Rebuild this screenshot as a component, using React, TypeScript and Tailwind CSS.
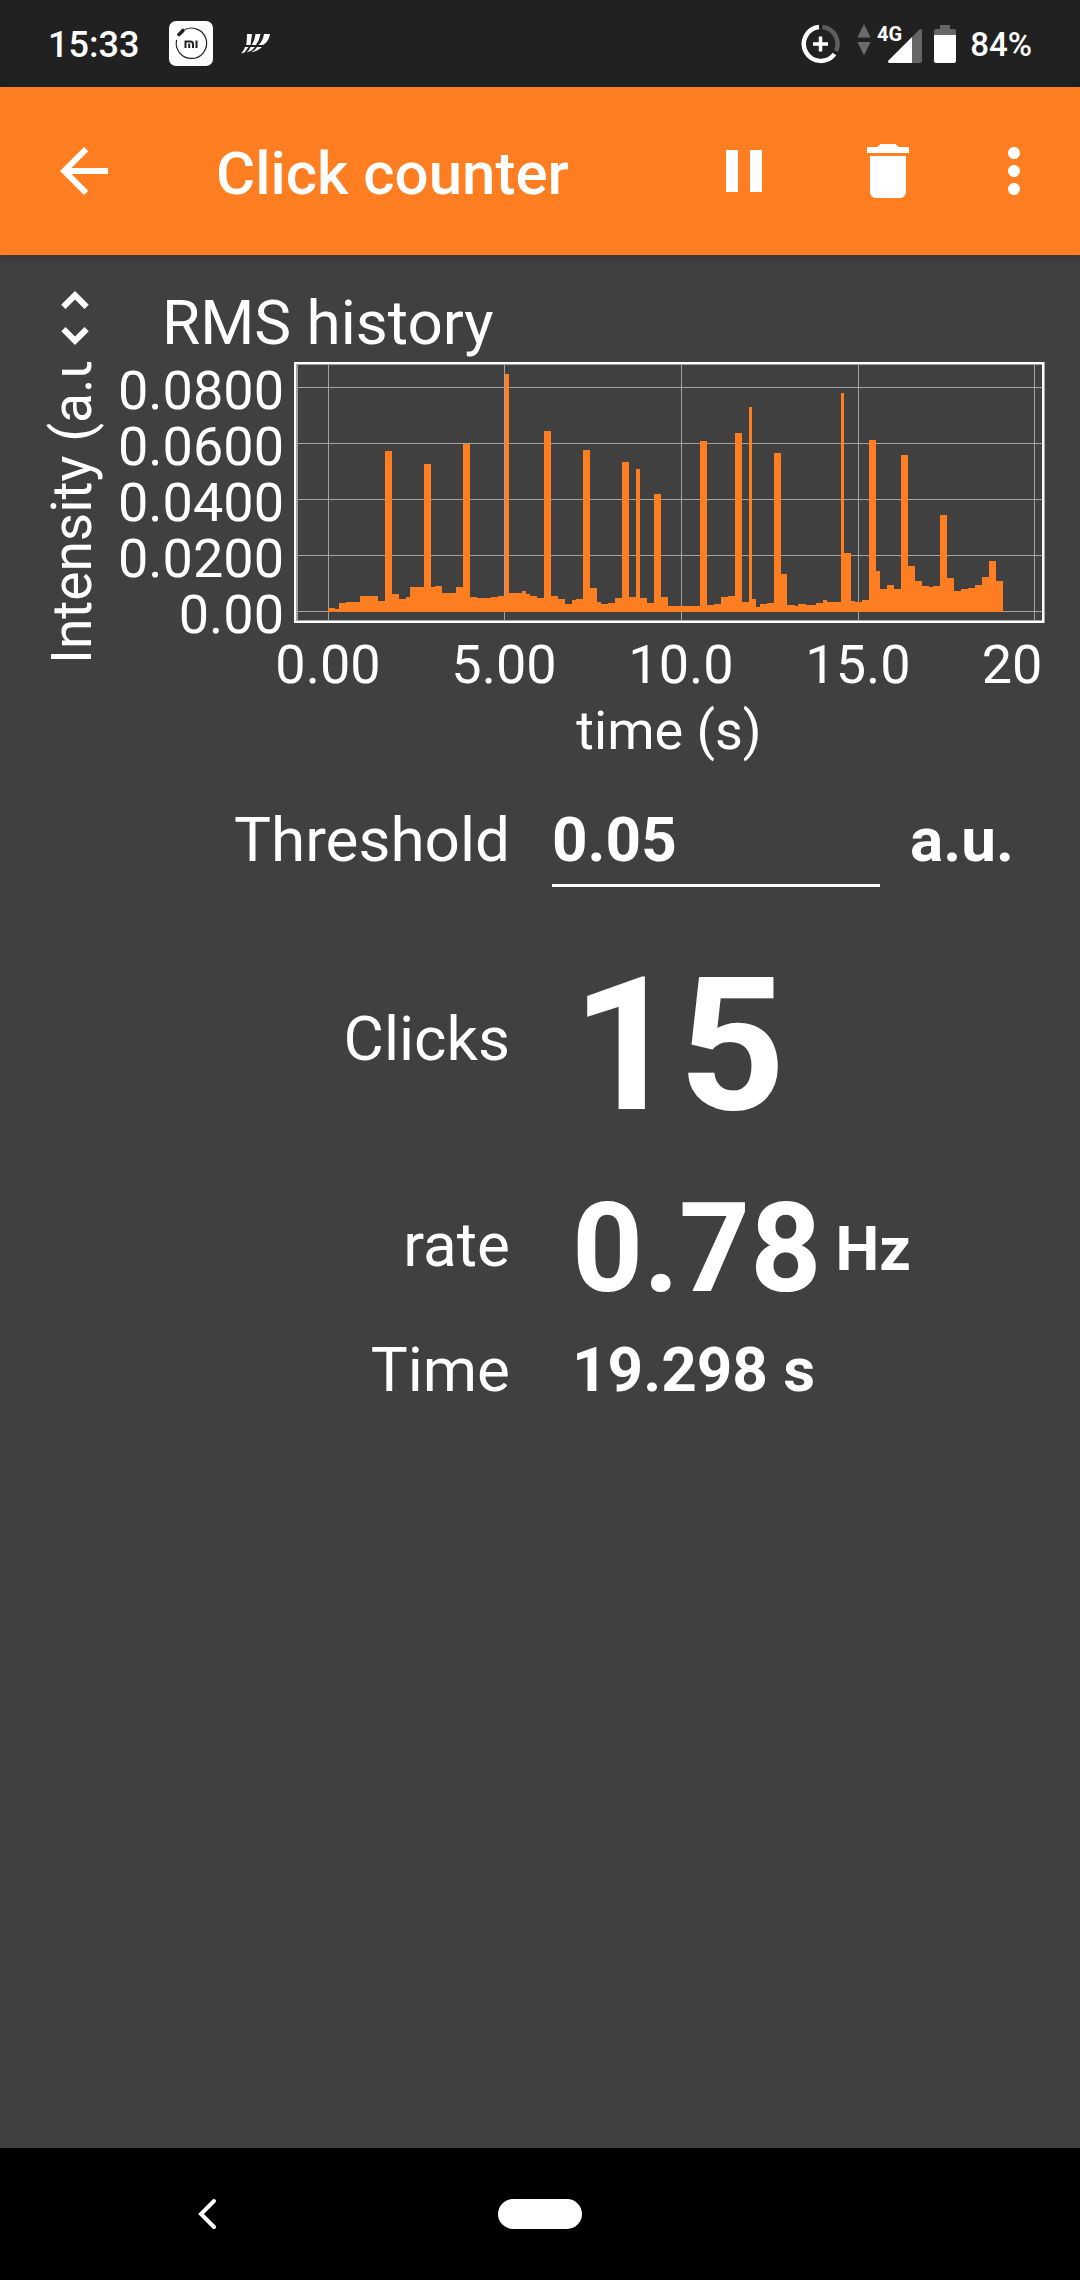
import { useState } from "react";
import type { ReactNode } from "react";

// Each entry is [start, height] in plot pixels; a step lasts until the next start.
const steps: [number, number][] = [
  [0, 4], [7, 3], [11, 9], [18, 10], [32, 16], [50, 11], [57, 161], [64, 18], [71, 13], [78, 15],
  [82, 25], [96, 148], [103, 25], [107, 26], [114, 19], [128, 25], [135, 168], [142, 15], [149, 14],
  [163, 15], [170, 16], [177, 238], [181, 19], [194, 21], [198, 18], [202, 16], [209, 14], [216, 181],
  [223, 16], [230, 13], [237, 8], [244, 12], [248, 13], [255, 162], [262, 24], [269, 10], [273, 8],
  [280, 9], [287, 14], [294, 150], [301, 15], [308, 143], [312, 14], [319, 9], [326, 118], [333, 15],
  [340, 6], [372, 171], [379, 7], [386, 8], [393, 15], [400, 16], [407, 179], [414, 10], [421, 205],
  [424, 13], [428, 5], [432, 8], [439, 9], [446, 159], [453, 38], [459, 7], [467, 6], [470, 8],
  [478, 7], [488, 9], [495, 12], [499, 10], [513, 219], [516, 59], [523, 11], [527, 10], [534, 12],
  [541, 172], [548, 41], [552, 23], [559, 27], [566, 23], [573, 157], [580, 46], [587, 31], [594, 26],
  [601, 25], [605, 26], [612, 97], [619, 34], [626, 21], [633, 23], [640, 24], [647, 27], [654, 35],
  [661, 51], [668, 31],
];
const seriesEnd = 675;
const originX = 217;
const baseY = 256;

const seriesPath =
  `M${originX} ${baseY}` +
  steps.map(([x, h]) => `H${originX + x}V${baseY - h}`).join("") +
  `H${originX + seriesEnd}V${baseY}Z`;

const yTicks = [
  { y: 31, label: "0.0800" },
  { y: 87, label: "0.0600" },
  { y: 143, label: "0.0400" },
  { y: 199, label: "0.0200" },
  { y: 255, label: "0.00" },
];

const xTicks = [
  { x: 217, labelX: 217, label: "0.00" },
  { x: 393, labelX: 393, label: "5.00" },
  { x: 570, labelX: 570, label: "10.0" },
  { x: 747, labelX: 747, label: "15.0" },
  { x: 923, labelX: 901, label: "20" },
];

function MaterialIcon({ d }: { d: string }) {
  return (
    <svg viewBox="0 0 24 24" className="size-[72px] shrink-0" fill="currentColor" aria-hidden="true">
      <path d={d} />
    </svg>
  );
}

function StatusBar() {
  return (
    <div className="flex h-[87px] items-center justify-between bg-[#212121] px-12">
      <div className="flex items-center">
        <span className="pt-[2px] text-[36px] leading-[44px] font-medium">15:33</span>
        <svg viewBox="0 0 44 45" className="ml-[30px] h-[45px] w-[44px]" aria-hidden="true">
          <rect width="44" height="45" rx="7" fill="#fff" />
          <path d="M16 8.500A15.200 15.200 0 1 1 7.600 19" fill="none" stroke="#212121" strokeWidth="1.200" />
          <path d="M10 13.500l4-4" stroke="#212121" strokeWidth="3.600" strokeLinecap="round" />
          <path
            d="M16.500 27v-6.500h5q2.500 0 2.500 2.500v4M20.200 22.500V27M27.500 19.500V27"
            fill="none"
            stroke="#212121"
            strokeWidth="2"
          />
        </svg>
        <svg viewBox="0 0 30 20" className="ml-7 h-5 w-[30px]" fill="#fff" aria-hidden="true">
          <path d="M6 0h5L9.500 11H5.200Q6 6 6 0zM14.500 0h5q-.8 6-4.500 11h-4.200q3-5 3.700-11zM23 0h6q-1.500 8-7 11h-4.500Q22 7 23 0z" />
          <path d="M4 13h3.500L3.500 18.500 0 19.500Q3 16.500 4 13zM9.500 13H14q-3 4-8.500 5.500Q8.500 16 9.500 13zM16 13h5q-4.500 4.500-11 5.200Q14.500 16 16 13z" />
        </svg>
      </div>
      <div className="flex items-center">
        <svg viewBox="0 0 40 40" className="mr-1 size-10" fill="none" aria-hidden="true">
          <path d="M18 3A17 17 0 1 0 33.500 30" stroke="#fff" strokeWidth="4.500" />
          <path d="M21.500 3A17 17 0 0 1 35 27" stroke="#5e5e5e" strokeWidth="4.500" />
          <path d="M19.500 12.500v15M12 20h15" stroke="#fff" strokeWidth="3.500" />
        </svg>
        <svg viewBox="0 0 14 32" className="mr-[6px] mb-2 ml-3 h-8 w-[14px]" fill="#6b6b6b" aria-hidden="true">
          <path d="M7 0l6.500 13.500H.5zM7 31.500L.5 18h13z" />
        </svg>
        <span className="mb-5 text-[20px] leading-6 font-bold">4G</span>
        <svg viewBox="0 0 34 34" className="mt-1 -ml-[14px] size-[34px]" aria-hidden="true">
          <path d="M24 8l7.500-7.500Q34-1 34 2v30q0 2-2 2h-8z" fill="#666" />
          <path d="M24 8v26H2q-3 0-1.500-2.500z" fill="#fff" />
        </svg>
        <svg viewBox="0 0 22 38" className="ml-3 h-[38px] w-[22px]" aria-hidden="true">
          <path d="M6 0h10v4h4q2 0 2 2v4H0V6q0-2 2-2h4z" fill="#666" />
          <path d="M0 10h22v26q0 2-2 2H2q-2 0-2-2z" fill="#fff" />
        </svg>
        <span className="ml-[14px] pt-[2px] text-[33px] leading-[44px] font-medium">84%</span>
      </div>
    </div>
  );
}

function AppBar() {
  return (
    <header className="relative flex h-[168px] items-center bg-[#ff7e22] pr-[30px] pl-12 shadow-[0_4px_12px_rgba(0,0,0,0.15)]">
      <button type="button" aria-label="Back">
        <MaterialIcon d="M20 11H7.830l5.590-5.590L12 4l-8 8 8 8 1.410-1.410L7.830 13H20v-2z" />
      </button>
      <h1 className="ml-24 flex-1 pt-[6px] text-[60px] leading-[72px] font-medium">Click counter</h1>
      <button type="button" aria-label="Pause">
        <MaterialIcon d="M6 19h4V5H6v14zm8-14v14h4V5h-4z" />
      </button>
      <button type="button" aria-label="Clear data" className="ml-[72px]">
        <MaterialIcon d="M6 19c0 1.100.9 2 2 2h8c1.100 0 2-.9 2-2V7H6v12zM19 4h-3.500l-1-1h-5l-1 1H5v2h14V4z" />
      </button>
      <button type="button" aria-label="More options" className="ml-[54px]">
        <MaterialIcon d="M12 8c1.100 0 2-.9 2-2s-.9-2-2-2-2 .9-2 2 .9 2 2 2zm0 2c-1.100 0-2 .9-2 2s.9 2 2 2 2-.9 2-2-.9-2-2-2zm0 6c-1.100 0-2 .9-2 2s.9 2 2 2 2-.9 2-2-.9-2-2-2z" />
      </button>
    </header>
  );
}

function HistoryChart() {
  return (
    <section className="flex items-start pt-[27px] pl-[39px]">
      <div className="flex w-[72px] shrink-0 flex-col items-start gap-2">
        <button type="button" aria-label="Expand graph">
          <MaterialIcon d="M12 5.830L15.170 9l1.410-1.410L12 3 7.410 7.590 8.830 9 12 5.830zm0 12.340L8.830 15l-1.410 1.410L12 21l4.590-4.590L15.170 15 12 18.170z" />
        </button>
        <div className="h-[302px] w-[66px] rotate-180 overflow-hidden text-[55px] leading-[66px] whitespace-nowrap [writing-mode:vertical-rl]">
          Intensity (a.u.)
        </div>
      </div>
      <div className="min-w-0 flex-1">
        <h2 className="ml-[51px] pt-2 text-[62px] leading-[66px]">RMS history</h2>
        <svg viewBox="0 0 969 412" className="w-full font-[Roboto,sans-serif] text-[54px]" role="img" aria-label="RMS history">
          <g stroke="#a3a3a3" strokeWidth="1" shapeRendering="crispEdges">
            {yTicks.map((t) => (
              <line key={t.label} x1="183" x2="933" y1={t.y} y2={t.y} />
            ))}
            {xTicks.map((t) => (
              <line key={t.label} x1={t.x} x2={t.x} y1="7" y2="267" />
            ))}
          </g>
          <path d={seriesPath} fill="#ff7e22" shapeRendering="crispEdges" />
          <rect x="185" y="7" width="747" height="258" fill="none" stroke="#a3a3a3" strokeWidth="3" shapeRendering="crispEdges" />
          <rect x="184" y="7" width="748" height="259" fill="none" stroke="#fff" strokeWidth="2" shapeRendering="crispEdges" />
          <g fill="#fff">
            {yTicks.map((t) => (
              <text key={t.label} x="173" y={t.y + 22} textAnchor="end">
                {t.label}
              </text>
            ))}
            {xTicks.map((t) => (
              <text key={t.label} x={t.labelX} y="327" textAnchor="middle">
                {t.label}
              </text>
            ))}
            <text x="558" y="393" textAnchor="middle">
              time (s)
            </text>
          </g>
        </svg>
      </div>
    </section>
  );
}

function Row({ className, children }: { className: string; children: ReactNode }) {
  return <div className={`grid grid-cols-[17fr_19fr] items-center text-[62px] leading-[72px] ${className}`}>{children}</div>;
}

export default function App() {
  const [threshold, setThreshold] = useState("0.05");
  return (
    <div className="flex min-h-screen flex-col bg-[#404040] font-[Roboto,sans-serif] text-white">
      <StatusBar />
      <AppBar />
      <main className="flex-1">
        <HistoryChart />
        <Row className="h-[144px]">
          <label htmlFor="threshold" className="text-right">
            Threshold
          </label>
          <div className="flex items-center gap-[30px] pl-[42px] font-bold">
            <input
              id="threshold"
              type="text"
              inputMode="decimal"
              value={threshold}
              onChange={(e) => setThreshold(e.target.value)}
              className="mt-[10px] w-[328px] border-b-[3px] border-white bg-transparent pb-2 outline-none"
            />
            <span>a.u.</span>
          </div>
        </Row>
        <Row className="h-[266px]">
          <div className="pb-3 text-right">Clicks</div>
          <div className="pl-[62px] text-[186px] leading-[218px] font-bold">15</div>
        </Row>
        <Row className="h-[142px]">
          <div className="pb-2 text-right">rate</div>
          <div className="flex items-center gap-[14px] pl-[62px] font-bold">
            <span className="text-[124px] leading-[142px]">0.78</span>
            <span>Hz</span>
          </div>
        </Row>
        <Row className="h-[100px]">
          <div className="text-right">Time</div>
          <div className="pl-[62px] font-bold">19.298 s</div>
        </Row>
      </main>
      <nav className="grid h-[132px] grid-cols-[1fr_84px_1fr] items-center bg-black">
        <button type="button" aria-label="Back" className="ml-[196px] justify-self-start">
          <svg viewBox="0 0 22 32" className="h-8 w-[22px]" fill="none" aria-hidden="true">
            <path d="M18 3L5 16l13 13" stroke="#fff" strokeWidth="4" strokeLinecap="round" />
          </svg>
        </button>
        <button type="button" aria-label="Home" className="h-[30px] rounded-full bg-white" />
      </nav>
    </div>
  );
}
